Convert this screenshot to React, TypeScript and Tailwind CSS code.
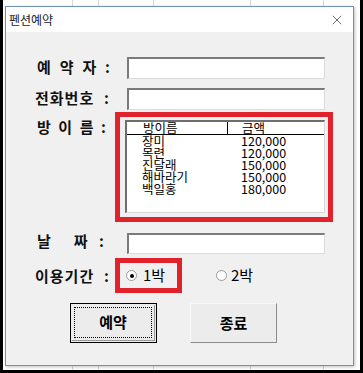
import { X } from "lucide-react";

const ko = { fontFamily: '"Noto Sans CJK KR", "Noto Sans", sans-serif' };

const rooms = [
  { name: "장미", price: "120,000" },
  { name: "목련", price: "120,000" },
  { name: "진달래", price: "150,000" },
  { name: "해바라기", price: "150,000" },
  { name: "백일홍", price: "180,000" },
];

const TextBox = ({ h = "h-[22px]" }: { h?: string }) => (
  <div
    className={`ml-[12px] w-[198px] ${h} bg-white border-t-2 border-l-2 border-t-[#7a7a7a] border-l-[#7a7a7a] border-b border-r border-b-[#dcdcdc] border-r-[#dcdcdc]`}
  />
);

// label: spread chars across a fixed width so the colon lands where the form has it
const Label = ({ parts, w, className = "" }: { parts: string[]; w: string; className?: string }) => (
  <div className="w-[80px] shrink-0">
    <div className={`${w} flex justify-between text-[15px] font-bold text-[#111] leading-[22px] ${className}`}>
      {parts.map((p, i) => (
        <span key={i}>{p}</span>
      ))}
    </div>
  </div>
);

const Radio = ({ checked }: { checked?: boolean }) => (
  <div className="w-[11px] h-[11px] rounded-full border border-[#9a9a9a] bg-white flex items-center justify-center">
    {checked && <div className="w-[4px] h-[4px] rounded-full bg-black" />}
  </div>
);

export default function App() {
  return (
    <div className="w-[363px] h-[373px] bg-black px-[3px] pb-[3px] overflow-hidden" style={ko}>
      <div className="relative w-full h-full bg-white bg-[linear-gradient(90deg,transparent_69px,#d6d6d6_69px,#d6d6d6_70px,transparent_70px,transparent_95px,#d6d6d6_95px,#d6d6d6_96px,transparent_96px,transparent_150px,#d6d6d6_150px,#d6d6d6_151px,transparent_151px,transparent_247px,#d6d6d6_247px,#d6d6d6_248px,transparent_248px,transparent_320px,#d6d6d6_320px,#d6d6d6_321px,transparent_321px)]">
        {/* dialog window */}
        <div className="absolute left-[2px] top-[6px] w-[349px] h-[360px] border border-[#7391b0] bg-[#f0f0f0] flex flex-col shadow-[1px_1px_3px_rgba(0,0,0,0.25)]">
          <div className="h-[25px] bg-white flex items-center justify-between pl-[3px] pr-[8px]">
            <span className="text-[12px] text-[#222]">펜션예약</span>
            <X className="w-[16px] h-[16px] text-[#222]" strokeWidth={1} />
          </div>

          <div className="flex flex-col pl-[29px]">
            <div className="flex items-center mt-[25px]">
              <Label parts={["예", "약", "자", ":"]} w="w-[73px] ml-[2px]" className="-mt-[3px]" />
              <TextBox />
            </div>

            <div className="flex items-center mt-[9px]">
              <Label parts={["전화번호", ":"]} w="w-[75px]" className="-mt-[3px] tracking-[1px]" />
              <TextBox />
            </div>

            <div className="flex items-start mt-[2px]">
              <Label parts={["방", "이", "름", ":"]} w="w-[69px] ml-[2px]" className="mt-[4px]" />
              <div className="w-[218px] h-[110px] border-[5px] border-[#e0222c] pl-[5px] pr-[3px] pt-[3px]">
                <div className="w-[200px] h-[93px] bg-white border-t-2 border-l-2 border-t-[#6e6e6e] border-l-[#6e6e6e] border-b border-r border-b-[#d8d8d8] border-r-[#d8d8d8] overflow-hidden">
                  <div className="flex h-[13px] border-b border-black text-[12.5px] leading-[12px] text-black">
                    <div className="w-[101px] border-r border-black pl-[16px]">방이름</div>
                    <div className="pl-[14px]">금액</div>
                  </div>
                  {rooms.map((r) => (
                    <div key={r.name} className="flex h-[12px] text-[12.5px] leading-[12px] text-black">
                      <div className="w-[114px] pl-[15px]">{r.name}</div>
                      <div>{r.price}</div>
                    </div>
                  ))}
                </div>
              </div>
            </div>

            <div className="flex items-center mt-[11px]">
              <Label parts={["날", "", "짜", ":"]} w="w-[67px] ml-[2px]" className="-mt-[6px]" />
              <TextBox h="h-[21px]" />
            </div>

            <div className="flex items-center mt-[4px]">
              <Label parts={["이용기간", ":"]} w="w-[75px]" className="tracking-[1px]" />
              <div className="w-[67px] h-[35px] border-[5px] border-[#e0222c] flex items-center pl-[6px]">
                <Radio checked />
                <span className="ml-[6px] text-[15px] text-black">1박</span>
              </div>
              <div className="ml-[34px] flex items-center">
                <Radio />
                <span className="ml-[4px] text-[15px] text-black">2박</span>
              </div>
            </div>

            <div className="flex mt-[10px] pl-[35px] gap-[33px]">
              <div className="w-[87px] h-[40px] border border-black bg-[#ececec] p-[1px]">
                <div className="w-full h-full border-b border-r border-[#9a9a9a] p-[2px]">
                  <div className="w-full h-full border border-dotted border-black flex items-center justify-center text-[15px] font-bold text-black">
                    예약
                  </div>
                </div>
              </div>
              <div className="w-[87px] h-[40px] border border-[#f8f8f8] border-b-[#8a8a8a] border-r-[#8a8a8a] bg-[#ececec] flex items-center justify-center text-[15px] font-bold text-black">
                종료
              </div>
            </div>
          </div>
        </div>
      </div>
    </div>
  );
}
